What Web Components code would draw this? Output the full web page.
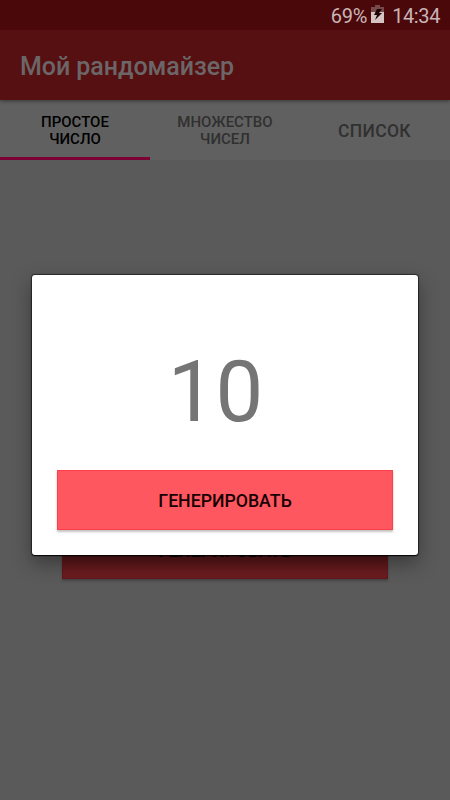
<!DOCTYPE html>
<html lang="ru">
<head>
<meta charset="utf-8">
<title>Мой рандомайзер</title>
<style>
body{
    margin:0;
    width:450px;
    height:800px;
    overflow:hidden;
    background-color:#5A5A5A;
    font-family:Roboto, "Liberation Sans", sans-serif;
}
</style>
</head>
<body>
<randomizer-app></randomizer-app>

<script>
function makeTemplate(html){
    const template = document.createElement("template");
    template.innerHTML = html;
    return template;
}

const statusTemplate = makeTemplate(`
<style>
:host{
    display:flex;
    justify-content:flex-end;
    align-items:center;
    position:relative;
    z-index:2;
    height:30px;
    padding:1px 10px 0 0;
    box-sizing:border-box;
    background-color:#4A080B;
    color:#C9B5B6;
    font-size:20px;
    line-height:30px;
}
svg{
    flex:none;
    width:13px;
    height:18px;
    margin:0 8px 3px 4px;
}
#battery{
    letter-spacing:-0.2px;
}
#time{
    letter-spacing:-0.4px;
}
</style>
<span id="battery"></span>
<svg viewBox="0 0 13 18">
    <path d="M4 0h5v2h4v5H0V2h4z" fill="#78494B"/>
    <path d="M0 7h13v11H0z" fill="#D6C4C5"/>
    <path d="M6 4h5L8 8h3L4 15l2-5H3z" fill="#1D0003"/>
</svg>
<span id="time"></span>
`);

class StatusBar extends HTMLElement{
    constructor(){
        super();
        this.attachShadow({mode: "open"});
        this.shadowRoot.appendChild(statusTemplate.content.cloneNode(true));
    }

    connectedCallback(){
        this.shadowRoot.getElementById("battery").textContent = this.getAttribute("battery");
        this.shadowRoot.getElementById("time").textContent = this.getAttribute("time");
    }
}

const barTemplate = makeTemplate(`
<style>
:host{
    display:flex;
    align-items:center;
    position:relative;
    z-index:1;
    height:70px;
    padding:2px 20px 0;
    box-sizing:border-box;
    background-color:#561012;
    box-shadow:0 1px 4px rgba(0,0,0,.45);
    color:#6B6667;
    font-size:25px;
    font-weight:500;
    letter-spacing:-0.05px;
}
</style>
<slot></slot>
`);

class AppBar extends HTMLElement{
    constructor(){
        super();
        this.attachShadow({mode: "open"});
        this.shadowRoot.appendChild(barTemplate.content.cloneNode(true));
    }
}

const tabTemplate = makeTemplate(`
<style>
:host{
    display:flex;
    justify-content:center;
    align-items:center;
    text-align:center;
    box-sizing:border-box;
    height:60px;
    padding:2px 26px 0;
    color:#303030;
    font-size:15px;
    font-weight:500;
    line-height:17px;
}
:host([large]){
    font-size:17.5px;
    padding-right:27px;
    letter-spacing:0.3px;
}
:host([active]){
    color:#000;
    padding-top:5px;
    border-bottom:3px solid #7B0033;
}
</style>
<slot></slot>
`);

class TabItem extends HTMLElement{
    constructor(){
        super();
        this.attachShadow({mode: "open"});
        this.shadowRoot.appendChild(tabTemplate.content.cloneNode(true));
    }
}

const buttonTemplate = makeTemplate(`
<style>
:host{
    display:block;
}
button{
    display:block;
    width:100%;
    height:60px;
    padding:var(--drop, 1px) 0 0;
    border:1px solid var(--edge, #FF3E4B);
    background:var(--fill, #FF575F);
    box-shadow:0 2px 2px rgba(0,0,0,.24);
    color:var(--ink, #160003);
    font:500 17.7px Roboto, "Liberation Sans", sans-serif;
}
</style>
<button><slot></slot></button>
`);

class RaisedButton extends HTMLElement{
    constructor(){
        super();
        this.attachShadow({mode: "open"});
        this.shadowRoot.appendChild(buttonTemplate.content.cloneNode(true));
    }
}

const dialogTemplate = makeTemplate(`
<style>
:host{
    display:flex;
    flex-direction:column;
    box-sizing:border-box;
    width:387px;
    height:280px;
    padding:0 25px 25px;
    border-radius:3px;
    background-color:#FFF;
    box-shadow:0 1px 1px rgba(0,0,0,.8), 0 0 1px 1px rgba(0,0,0,.5), 0 8px 20px rgba(0,0,0,.38);
}
#number{
    flex:1;
    display:flex;
    justify-content:center;
    align-items:center;
    padding:38px 19px 0 0;
    color:#757575;
    font-size:85px;
    line-height:100px;
}
</style>
<div id="number"></div>
<slot></slot>
`);

class ResultDialog extends HTMLElement{
    constructor(){
        super();
        this.attachShadow({mode: "open"});
        this.shadowRoot.appendChild(dialogTemplate.content.cloneNode(true));
    }

    connectedCallback(){
        this.shadowRoot.getElementById("number").textContent = this.getAttribute("number");
    }
}

const appTemplate = makeTemplate(`
<style>
:host{
    display:block;
    position:relative;
    height:800px;
}
nav{
    display:grid;
    grid-template-columns:repeat(3, 150px);
    background-color:#606060;
}
main{
    padding:359px 62px 0;
}
.dimmed{
    --edge:#62171B;
    --fill:linear-gradient(#431012 40%, #6B1C1F 90%);
    --ink:#080000;
    --drop:4px;
}
/* the dialog lies over the dimmed page */
result-dialog{
    position:absolute;
    top:275px;
    left:32px;
    width:386px;
}
</style>
<status-bar battery="69%" time="14:34"></status-bar>
<app-bar>Мой рандомайзер</app-bar>
<nav>
    <tab-item active>ПРОСТОЕ ЧИСЛО</tab-item>
    <tab-item>МНОЖЕСТВО ЧИСЕЛ</tab-item>
    <tab-item large>СПИСОК</tab-item>
</nav>
<main>
    <raised-button class="dimmed">ГЕНЕРИРОВАТЬ</raised-button>
</main>
<result-dialog number="10">
    <raised-button>ГЕНЕРИРОВАТЬ</raised-button>
</result-dialog>
`);

class RandomizerApp extends HTMLElement{
    constructor(){
        super();
        this.attachShadow({mode: "open"});
        this.shadowRoot.appendChild(appTemplate.content.cloneNode(true));
    }
}

customElements.define("status-bar", StatusBar);
customElements.define("app-bar", AppBar);
customElements.define("tab-item", TabItem);
customElements.define("raised-button", RaisedButton);
customElements.define("result-dialog", ResultDialog);
customElements.define("randomizer-app", RandomizerApp);
</script>
</body>
</html>
